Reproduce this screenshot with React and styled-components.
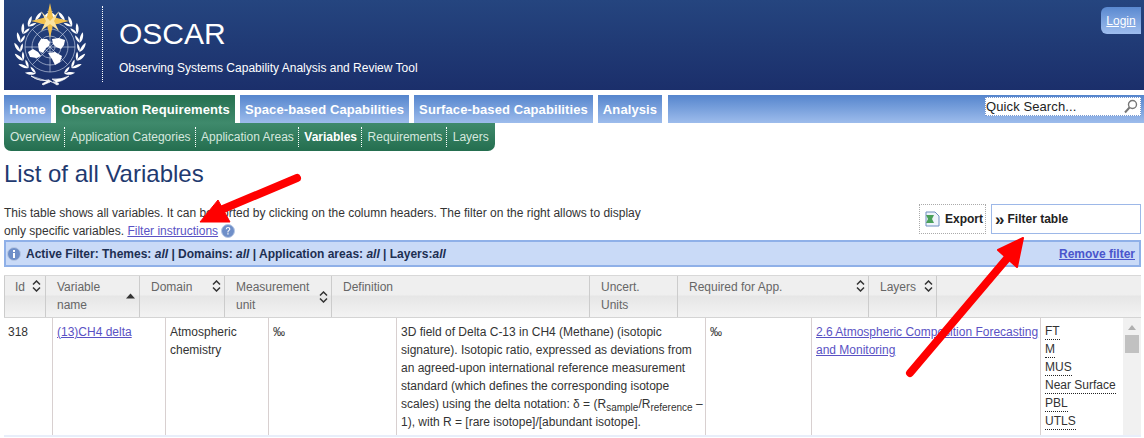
import React from "react";
import styled, { createGlobalStyle } from "styled-components";

const Global = createGlobalStyle`
  html, body { margin: 0; padding: 0; height: 438px; overflow: hidden; background: #fff; }
  body { font-family: "Liberation Sans", Arial, sans-serif; font-size: 12px; color: #333; }
  * { box-sizing: border-box; }
`;
const Page = styled.div`position: relative; width: 1144px; height: 438px; overflow: hidden; padding-left: 4px;`;
const Header = styled.header`
  position: relative; height: 90px; display: flex; align-items: flex-start; color: #fff;
  background: linear-gradient(#25457f, #1b2f6b);
`;
const LogoBox = styled.div`width: 98px; height: 90px; padding: 2px 0 0 9px; flex: none;`;
const Divider = styled.div`width: 0; height: 76px; margin-top: 6px; border-left: 1px dotted #fff; flex: none;`;
const Brand = styled.div`margin-left: 16px;`;
const Title = styled.div`font-size: 30px; line-height: 37px; margin-top: 15px;`;
const Tagline = styled.div`font-size: 12px; line-height: 15px; margin-top: 9px;`;
const Login = styled.a`
  position: absolute; right: 3px; top: 7px; width: 40px; height: 27px; border-radius: 6px 0 0 6px;
  background: linear-gradient(#5a89d0, #9ebdee); color: #fff; font-size: 12px; text-decoration: underline;
  display: flex; align-items: center; justify-content: center;
`;
const Nav = styled.nav`display: flex; gap: 5px; margin-top: 5px; height: 28px;`;
const Tab = styled.a`
  display: flex; align-items: center; justify-content: center; height: 28px; flex: none; width: ${p => p.$w}px;
  font-weight: bold; font-size: 13px; letter-spacing: 0.1px; color: #fff;
  background: ${p => p.$on ? "linear-gradient(#25704f, #3f8a6c)" : "linear-gradient(#5585cd, #9dbcec)"};
`;
const NavFill = styled.div`
  flex: 1; margin-left: 1px; display: flex; justify-content: flex-end; padding: 2px 3px 0 0;
  background: linear-gradient(#5585cd, #9dbcec);
`;
const Search = styled.div`
  width: 156px; height: 19px; background: #fff; border: 1px dotted #7a9ad0; color: #222;
  font-size: 13px; letter-spacing: 0.1px; display: flex; align-items: center; justify-content: space-between; padding: 0 2px 0 0;
`;
const SubNav = styled.div`
  display: inline-flex; height: 28px; align-items: center; padding: 0 0 0 6px; width: 491px; border-radius: 0 0 7px 7px;
  background: linear-gradient(#3f8a6c, #246e4f); vertical-align: top;
`;
const SubItem = styled.a`
  height: 20px; display: flex; align-items: center; font-size: 12px; flex: none;
  padding: 0 4px 0 ${p => p.$first ? 0 : 5.5}px; color: ${p => p.$on ? "#fff" : "#d6e8df"};
  font-weight: ${p => p.$on ? "bold" : "normal"};
  border-left: ${p => p.$first ? "0" : "1px dotted #fff"};
`;
const H1 = styled.h1`margin: 8px 0 0; font-size: 24px; line-height: 30px; font-weight: normal; color: #1f3a70; height: 30px;`;
const Intro = styled.div`display: flex; justify-content: space-between; height: 51px; padding-top: 15px;`;
const IntroText = styled.p`margin: 0; width: 650px; line-height: 18px; color: #333;`;
const InfoLink = styled.a`color: #5a52c4; text-decoration: underline;`;
const Tools = styled.div`display: flex; gap: 5px; margin-right: 3px; height: 30px;`;
const ExportBox = styled.div`
  width: 67px; height: 30px; border: 1px dotted #aaa; display: flex; align-items: center; gap: 5px; padding-left: 5px;
  font-weight: bold; font-size: 12px; color: #222;
`;
const FilterBox = styled.div`
  width: 150px; height: 30px; border: 1px solid #9db8e8; font-weight: bold; color: #222; display: flex; align-items: center; padding-left: 3px; gap: 3px;
`;
const Quote = styled.span`font-size: 17px; line-height: 15px;`;
const FilterBar = styled.div`
  height: 27px; margin-right: 3px; border: 2px solid #8fb0e8; background: #c9daf7; display: flex; align-items: center; padding: 1px 4px 0 1px;
  font-weight: bold; color: #1d2f52; gap: 5px;
`;
const RemoveLink = styled.a`margin-left: auto; color: #4a55cc; text-decoration: underline;`;
const HeadRow = styled.div`
  margin: 8px 3px 0 0; height: 43px; display: flex; border-top: 1px solid #d8d8d8; border-bottom: 1px solid #d4d4d4;
  background: linear-gradient(#efefef 0, #efefef 45%, #e6e6e6 50%, #f3f3f3 100%); color: #666;
`;
const HeadCell = styled.div`
  position: relative; flex: none; width: ${p => p.$w}px; border-right: 1px solid #ccc; line-height: 18px; padding: 2px 10px 0 11px;
  &:first-child { border-left: 1px solid #ccc; padding-left: 10px; }
`;
const Sort = styled.span`position: absolute; right: ${p => p.$r || 6}px; top: ${p => p.$t || 4}px; display: block; line-height: 0;`;
const BodyWrap = styled.div`display: flex; margin-right: 3px; height: 119px; border-bottom: 2px solid #e8eefa;`;
const Row = styled.div`flex: 1; display: grid; grid-template-columns: 49px 113px 103px 128px 309px 106px 229px 82px;`;
const Cell = styled.div`line-height: 18px; padding: 5px 0 0 4px; border-right: ${p => p.$last ? "0" : "1px solid #d8d0d0"}; overflow: hidden; color: #333;`;
const VarLink = styled.a`color: #5a52c4; text-decoration: underline;`;
const AppLink = styled.a`color: #5a52c4; text-decoration: underline;`;
const LayerList = styled.div`padding-top: 1px;`;
const Abbr = styled.span`display: table; line-height: 15px; margin-bottom: 2px; border-bottom: 1px dotted #222; color: #333;`;
const Scroll = styled.div`position: relative; width: 18px; background: #f1f1f1; flex: none;`;
const Thumb = styled.div`position: absolute; left: 2px; top: 17px; width: 14px; height: 18px; background: #c1c1c1;`;
const UpArrow = styled.div`position: absolute; left: 5px; top: 7px; width: 0; height: 0; border: 4px solid transparent; border-top: 0; border-bottom: 5px solid #b0b0b0;`;
const Sub = styled.sub`font-size: 10px; line-height: 0;`;
const Overlay = styled.svg`position: absolute; left: 0; top: 0; pointer-events: none;`;

const SortIcon = () => (
  <svg width="9" height="12" viewBox="0 0 9 12"><path d="M1 4.5 L4.5 1 L8 4.5 M1 7.5 L4.5 11 L8 7.5" fill="none" stroke="#333" strokeWidth="1.5" /></svg>
);
const SortUp = () => (
  <svg width="9" height="6" viewBox="0 0 9 6"><path d="M0 5.5 L4.5 0.5 L9 5.5 Z" fill="#333" /></svg>
);

const CX = 37, CY = 45, R = 30;
const WreathSide = () => {
  const nodes = [];
  for (let t = 0; t < 9; t++) {
    const a = 28 + t * 17.5;
    const rad = (a * Math.PI) / 180;
    const x = CX - R * Math.sin(rad);
    const y = CY + R * Math.cos(rad);
    const phi = a - 90;
    nodes.push(
      <g key={t} transform={`translate(${x.toFixed(1)} ${y.toFixed(1)})`}>
        <path transform={`rotate(${phi - 24})`} d="M0 0 C-2.4 -3 -2 -8 0 -11 C1.6 -8 1.6 -3 0 0Z" fill="#fff" />
        <path transform={`rotate(${phi + 24})`} d="M0 0 C-1.6 -3 -1.6 -6 0 -9 C1.6 -6 1.6 -3 0 0Z" fill="#fff" />
      </g>
    );
  }
  return <g>{nodes}</g>;
};
const Logo = () => (
  <svg width="76" height="86" viewBox="0 0 76 86">
    <WreathSide />
    <g transform="translate(74 0) scale(-1 1)"><WreathSide /></g>
    <path d="M18 74 Q28 80 36 78 L44 83 L46 82 L39 77 Q48 78 56 74 Q48 81 40 80 L44 82 M37 80 L30 83 L29 82 L36 78 Q26 80 18 74Z" fill="#fff" stroke="#fff" strokeWidth="0.6" />
    <g fill="none" stroke="#d5deef" strokeWidth="0.6">
      <circle cx="37" cy="45" r="25" /><circle cx="37" cy="45" r="18" /><circle cx="37" cy="45" r="11" /><circle cx="37" cy="45" r="5" />
      <path d="M12 45 H62 M37 20 V70 M19.3 27.3 L54.7 62.7 M54.7 27.3 L19.3 62.7" />
    </g>
    <path d="M25 42 L28 37 L34 37 L37 40 L36 44 L33 46 L30 51 L26 49 Z" fill="#fff" />
    <path d="M39 37 L46 36 L52 38 L51 43 L48 47 L43 45 L40 42 Z" fill="#fff" />
    <path d="M15 50 L20 47 L25 50 L28 54 L24 56 L17 55 Z" fill="#fff" />
    <path d="M35 51 L42 50 L49 54 L47 60 L42 63 L39 57 Z" fill="#fff" />
    <path d="M37 1 L40 15 L56 19 L40 23 L37 36 L34 23 L18 19 L34 15 Z" fill="#f2c14e" />
    <path d="M37 19 L46 9 L41 19 L46 29 L37 22 L28 29 L33 19 L28 9 Z" fill="#fae2a0" />
  </svg>
);
const SearchIcon = () => (
  <svg width="15" height="15" viewBox="0 0 15 15"><circle cx="9.5" cy="5.5" r="4" fill="none" stroke="#777" strokeWidth="1.4" /><path d="M6.5 8.5 L2 13.5" stroke="#777" strokeWidth="2" /></svg>
);
const XlsIcon = () => (
  <svg width="15" height="16" viewBox="0 0 15 16">
    <path d="M1 1 H10 L14 5 V15 H1 Z" fill="#eef3fb" stroke="#6f8fc0" />
    <path d="M1 4 L9 4 L7 8 L9 12 H1 L3 8 Z" fill="#4aa05a" />
  </svg>
);
const InfoIcon = ({ g }) => (
  <svg width="14" height="14" viewBox="0 0 14 14" style={{ verticalAlign: "-3px" }}>
    <circle cx="7" cy="7" r="6.5" fill="#6f8fc8" stroke="#b8c8e4" />
    <path d={g === "i" ? "M6 3 H8 V5 H6 Z M6 6 H8 V11 H6 Z" : "M4.7 5.2 Q5 3 7 3 Q9.4 3 9.4 5 Q9.4 6.2 8 7 Q7.4 7.4 7.4 8.4 H6.4 Q6.3 6.8 7.4 6.2 Q8.2 5.7 8.2 5 Q8.2 4.1 7 4.1 Q6 4.1 5.8 5.3 Z M6.3 9.2 H7.6 V10.6 H6.3 Z"} fill="#fff" />
  </svg>
);

export default function App() {
  return (
    <Page>
      <Global />
      <Header>
        <LogoBox><Logo /></LogoBox>
        <Divider />
        <Brand>
          <Title>OSCAR</Title>
          <Tagline>Observing Systems Capability Analysis and Review Tool</Tagline>
        </Brand>
        <Login>Login</Login>
      </Header>
      <Nav>
        <Tab $w={47}>Home</Tab>
        <Tab $w={179} $on>Observation Requirements</Tab>
        <Tab $w={169}>Space-based Capabilities</Tab>
        <Tab $w={179}>Surface-based Capabilities</Tab>
        <Tab $w={64}>Analysis</Tab>
        <NavFill>
          <Search>Quick Search...<SearchIcon /></Search>
        </NavFill>
      </Nav>
      <SubNav>
        <SubItem $first>Overview</SubItem>
        <SubItem>Application Categories</SubItem>
        <SubItem>Application Areas</SubItem>
        <SubItem $on>Variables</SubItem>
        <SubItem>Requirements</SubItem>
        <SubItem>Layers</SubItem>
      </SubNav>
      <H1>List of all Variables</H1>
      <Intro>
        <IntroText>
          This table shows all variables. It can be sorted by clicking on the column headers. The filter on the right allows to display only specific variables. <InfoLink>Filter instructions</InfoLink> <InfoIcon g="?" />
        </IntroText>
        <Tools>
          <ExportBox><XlsIcon />Export</ExportBox>
          <FilterBox><Quote>»</Quote>Filter table</FilterBox>
        </Tools>
      </Intro>
      <FilterBar>
        <InfoIcon g="i" />
        <span>Active Filter: Themes: <i>all</i> | Domains: <i>all</i> | Application areas: <i>all</i> | Layers:<i>all</i></span>
        <RemoveLink>Remove filter</RemoveLink>
      </FilterBar>
      <HeadRow>
        <HeadCell $w={42}>Id<Sort $r={4}><SortIcon /></Sort></HeadCell>
        <HeadCell $w={94}>Variable name<Sort $r={4} $t={17}><SortUp /></Sort></HeadCell>
        <HeadCell $w={85}>Domain<Sort $r={3}><SortIcon /></Sort></HeadCell>
        <HeadCell $w={107}>Measurement unit<Sort $r={3} $t={15}><SortIcon /></Sort></HeadCell>
        <HeadCell $w={258}>Definition</HeadCell>
        <HeadCell $w={88}>Uncert. Units</HeadCell>
        <HeadCell $w={191}>Required for App.<Sort $r={3}><SortIcon /></Sort></HeadCell>
        <HeadCell $w={68}>Layers<Sort $r={3}><SortIcon /></Sort></HeadCell>
      </HeadRow>
      <BodyWrap>
        <Row>
          <Cell>318</Cell>
          <Cell><VarLink>(13)CH4 delta</VarLink></Cell>
          <Cell>Atmospheric chemistry</Cell>
          <Cell>‰</Cell>
          <Cell>3D field of Delta C-13 in CH4 (Methane) (isotopic signature). Isotopic ratio, expressed as deviations from an agreed-upon international reference measurement standard (which defines the corresponding isotope scales) using the delta notation: δ = (R<Sub>sample</Sub>/R<Sub>reference</Sub> – 1), with R = [rare isotope]/[abundant isotope].</Cell>
          <Cell>‰</Cell>
          <Cell><AppLink>2.6 Atmospheric Composition Forecasting and Monitoring</AppLink></Cell>
          <Cell $last>
            <LayerList>
              <Abbr>FT</Abbr><Abbr>M</Abbr><Abbr>MUS</Abbr><Abbr>Near Surface</Abbr><Abbr>PBL</Abbr><Abbr>UTLS</Abbr>
            </LayerList>
          </Cell>
        </Row>
        <Scroll><UpArrow /><Thumb /></Scroll>
      </BodyWrap>
      <Overlay width="1144" height="438" viewBox="0 0 1144 438">
        <path d="M297 178 L216 212" stroke="#f00" strokeWidth="8" strokeLinecap="round" />
        <path d="M200 222 L218 200 L230 222 Z" fill="#f00" stroke="#f00" strokeLinejoin="round" />
        <path d="M910 373 L1010 255" stroke="#f00" strokeWidth="8" strokeLinecap="round" />
        <path d="M1023 238 L998 250 L1017 267 Z" fill="#f00" stroke="#f00" strokeWidth="2" strokeLinejoin="round" />
      </Overlay>
    </Page>
  );
}
